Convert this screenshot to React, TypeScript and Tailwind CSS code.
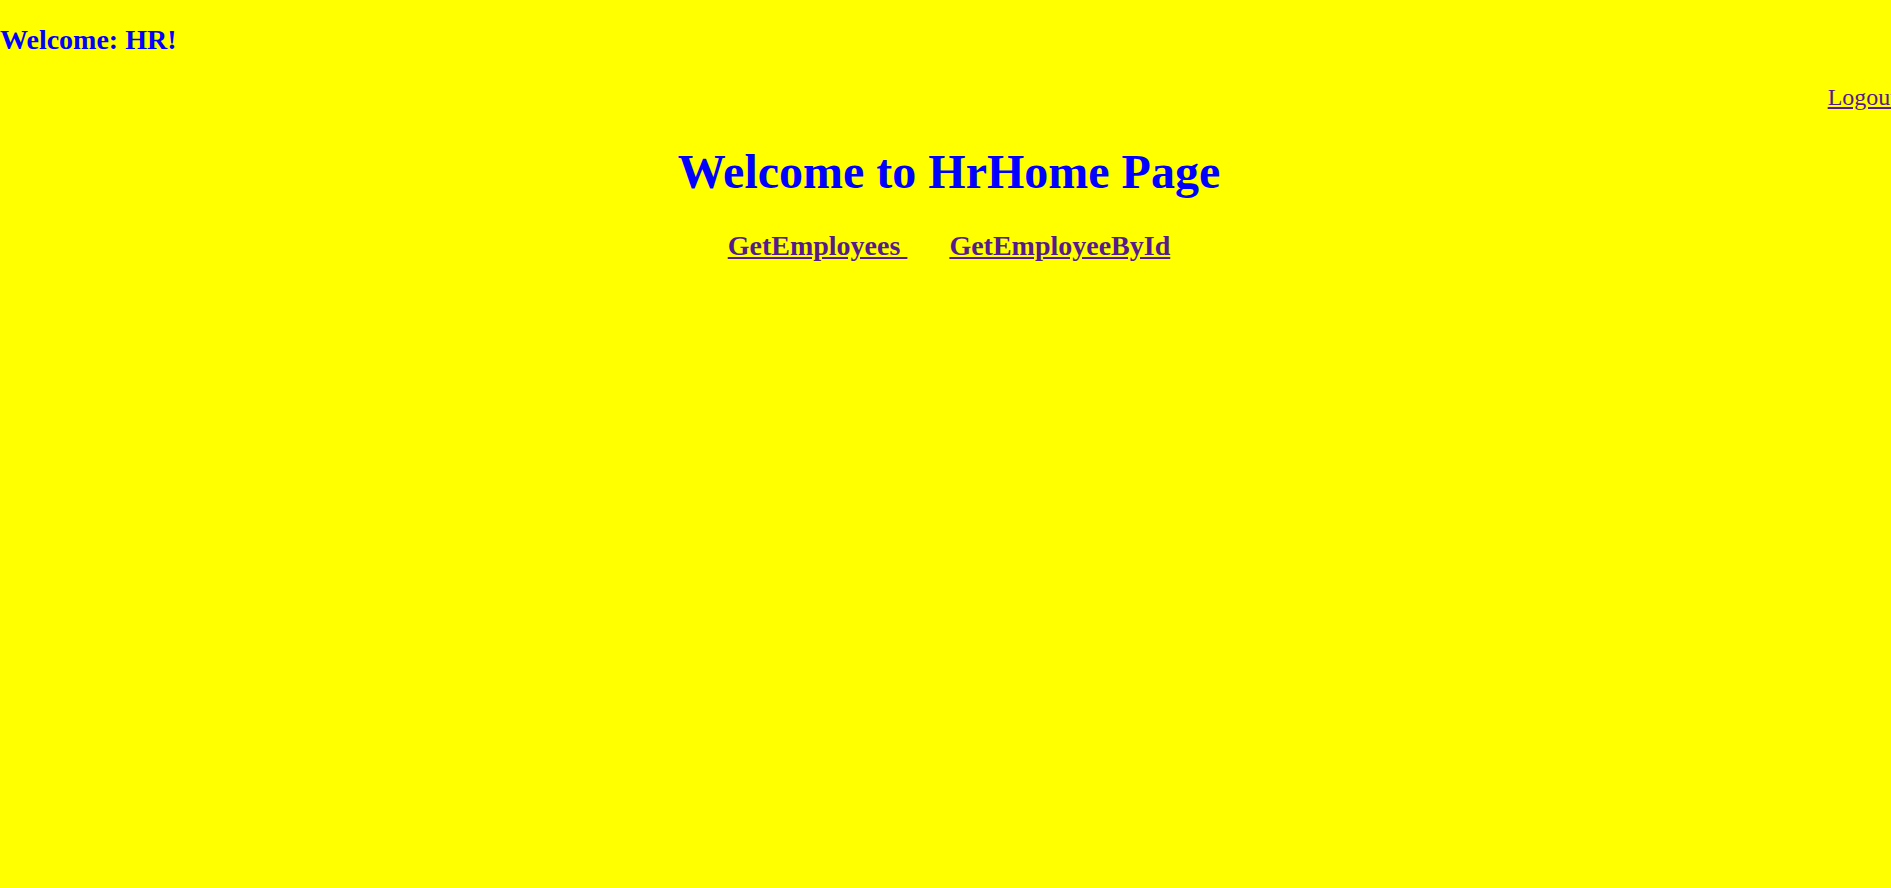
import React from 'react';

const App = () => {
    return (
        <div className="min-h-screen w-full overflow-hidden bg-[#ffff00] font-['Liberation_Serif',serif] leading-[normal]">
            <h3 className="pt-[24px] text-[28px] font-bold text-[#0000ff]">
                Welcome: HR!
            </h3>

            <div className="mt-[28px] flex justify-end mr-[-6px]">
                <a href="#" className="text-[24px] text-[#551a8b] underline">
                    Logout
                </a>
            </div>

            <h1 className="mt-[33px] pl-[7px] text-center text-[48px] font-bold text-[#0000ff]">
                Welcome to HrHome Page
            </h1>

            <h3 className="mt-[31px] pl-[7px] flex justify-center gap-[42px] text-[28px] font-bold">
                <a href="#" className="text-[#551a8b] underline whitespace-pre">GetEmployees </a>
                <a href="#" className="text-[#551a8b] underline">GetEmployeeById</a>
            </h3>
        </div>
    );
};

export default App;
